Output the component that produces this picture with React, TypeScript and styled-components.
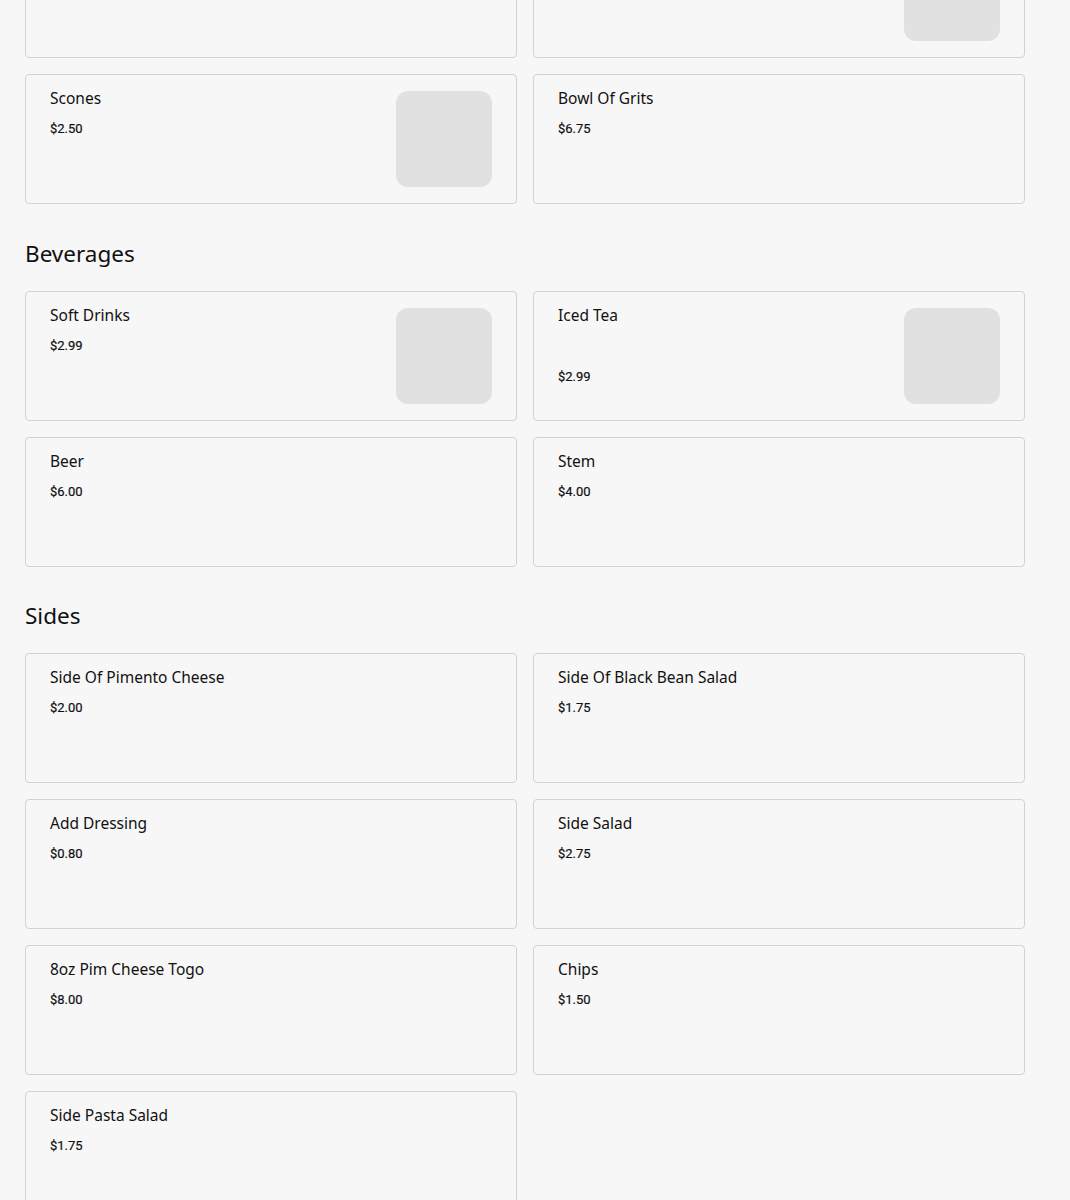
import React from "react";
import styled, { createGlobalStyle } from "styled-components";

const GlobalStyle = createGlobalStyle`
  html, body {
    margin: 0;
    padding: 0;
    background: #f7f7f7;
    overflow: hidden;
  }
  body {
    font-family: "Noto Sans", "Liberation Sans", sans-serif;
    color: #111;
  }
`;

type Item = { name: string; price: string; image?: boolean; desc?: string };
type Section = { title?: string; items: Item[] };

const sections: Section[] = [
  {
    items: [
      { name: "", price: "" },
      { name: "", price: "", image: true },
      { name: "Scones", price: "$2.50", image: true },
      { name: "Bowl Of Grits", price: "$6.75" },
    ],
  },
  {
    title: "Beverages",
    items: [
      { name: "Soft Drinks", price: "$2.99", image: true },
      { name: "Iced Tea", price: "$2.99", image: true, desc: "" },
      { name: "Beer", price: "$6.00" },
      { name: "Stem", price: "$4.00" },
    ],
  },
  {
    title: "Sides",
    items: [
      { name: "Side Of Pimento Cheese", price: "$2.00" },
      { name: "Side Of Black Bean Salad", price: "$1.75" },
      { name: "Add Dressing", price: "$0.80" },
      { name: "Side Salad", price: "$2.75" },
      { name: "8oz Pim Cheese Togo", price: "$8.00" },
      { name: "Chips", price: "$1.50" },
      { name: "Side Pasta Salad", price: "$1.75" },
    ],
  },
];

const Page = styled.main`
  width: 1000px;
  padding: 0 45px 0 25px;
  margin-top: -72px;
`;

const SectionBlock = styled.section<{ $first?: boolean }>`
  margin-top: ${(p) => (p.$first ? "0" : "35.5px")};
`;

const SectionTitle = styled.h2`
  margin: 0 0 23px;
  font-family: "Noto Sans", sans-serif;
  font-weight: 400;
  font-size: 22.5px;
  line-height: 28px;
  color: #111;
`;

const Grid = styled.div`
  display: grid;
  grid-template-columns: repeat(2, 492px);
  column-gap: 16px;
  row-gap: 16px;
`;

const Card = styled.article`
  box-sizing: border-box;
  height: 130px;
  border: 1px solid #d2d2d2;
  border-radius: 4px;
  background: #f7f7f7;
  padding: 16px 24px;
  display: flex;
  justify-content: space-between;
  align-items: flex-start;
`;

const Info = styled.div`
  display: flex;
  flex-direction: column;
  margin-top: -2px;
`;

const Name = styled.h3`
  margin: 0;
  font-family: "Noto Sans", sans-serif;
  font-weight: 400;
  font-size: 15.5px;
  line-height: 18px;
  color: #111;
`;

const Desc = styled.p`
  margin: 12px 0 0;
  min-height: 19px;
  font-size: 13px;
`;

const Price = styled.span`
  margin-top: 14px;
  font-family: Roboto, "Liberation Sans", sans-serif;
  font-weight: 400;
  font-size: 13px;
  line-height: 16px;
  color: #111;
  -webkit-text-stroke: 0.2px #111;
`;

const Thumb = styled.div`
  width: 96px;
  height: 96px;
  border-radius: 12px;
  background: #e1e1e1;
  flex-shrink: 0;
`;

function MenuCard({ item }: { item: Item }) {
  return (
    <Card>
      <Info>
        {item.name && <Name>{item.name}</Name>}
        {item.desc !== undefined && <Desc>{item.desc}</Desc>}
        {item.price && <Price>{item.price}</Price>}
      </Info>
      {item.image && <Thumb />}
    </Card>
  );
}

export default function App() {
  return (
    <>
      <GlobalStyle />
      <Page>
        {sections.map((s, i) => (
          <SectionBlock key={i} $first={i === 0}>
            {s.title && <SectionTitle>{s.title}</SectionTitle>}
            <Grid>
              {s.items.map((it, j) => (
                <MenuCard key={j} item={it} />
              ))}
            </Grid>
          </SectionBlock>
        ))}
      </Page>
    </>
  );
}
